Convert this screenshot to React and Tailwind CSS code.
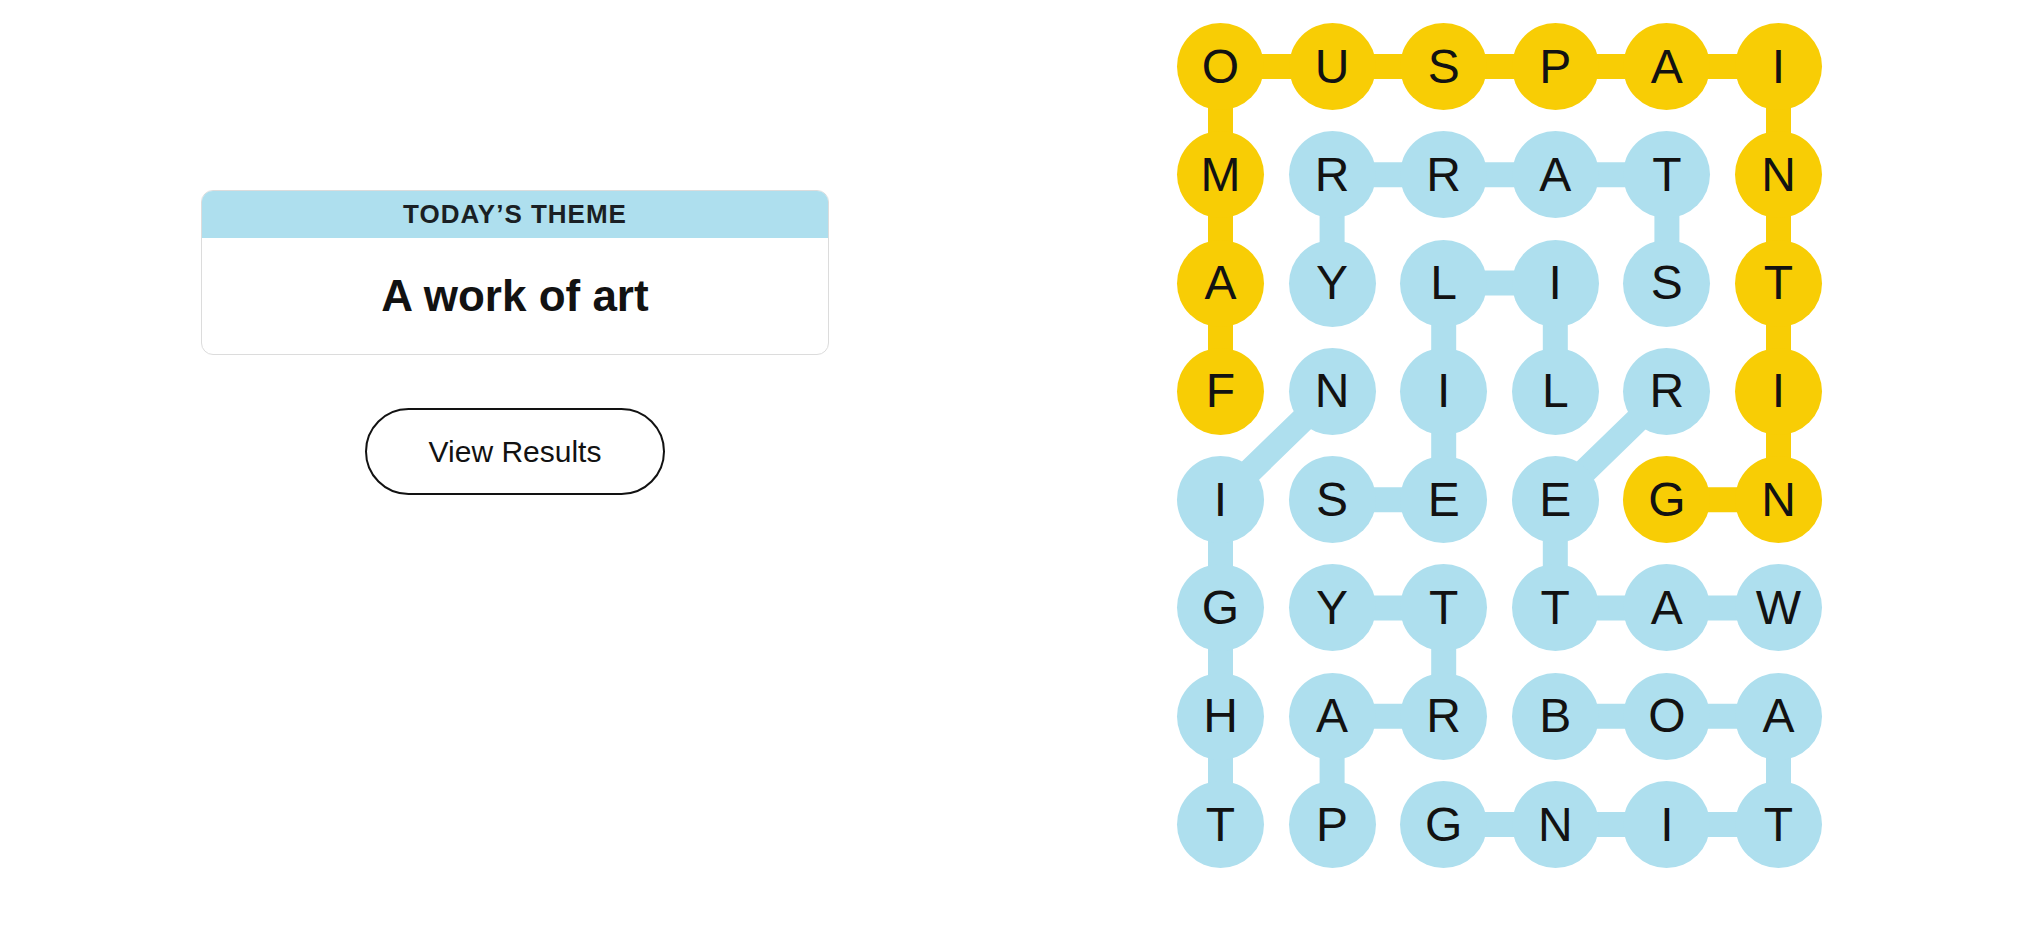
import React from "react";

const GRID = [
  "OUSPAI",
  "MRRATN",
  "AYLIST",
  "FNILRI",
  "ISEEGN",
  "GYTTAW",
  "HARBOA",
  "TPGNIT",
];

// spangram cells
const SPANGRAM = [
  [3, 0], [2, 0], [1, 0], [0, 0], [0, 1], [0, 2], [0, 3],
  [0, 4], [0, 5], [1, 5], [2, 5], [3, 5], [4, 5], [4, 4],
];

const WORDS = [
  [[2, 4], [1, 4], [1, 3], [1, 2], [1, 1], [2, 1]],
  [[3, 1], [4, 0], [5, 0], [6, 0], [7, 0]],
  [[5, 5], [5, 4], [5, 3], [4, 3], [3, 4]],
  [[3, 3], [2, 3], [2, 2], [3, 2], [4, 2], [4, 1]],
  [[6, 3], [6, 4], [6, 5], [7, 5], [7, 4], [7, 3], [7, 2]],
  [[7, 1], [6, 1], [6, 2], [5, 2], [5, 1]],
];

const D = 87;
const SX = 111.6;
const SY = 108.3;
const YELLOW = "#f8cd05";
const BLUE = "#aedfee";

const cx = (c) => D / 2 + c * SX;
const cy = (r) => D / 2 + r * SY;

const isSpangram = (r, c) => SPANGRAM.some(([a, b]) => a === r && b === c);

const Path = ({ cells, color }) => (
  <polyline
    points={cells.map(([r, c]) => `${cx(c)},${cy(r)}`).join(" ")}
    fill="none"
    stroke={color}
    strokeWidth="25"
    strokeLinejoin="round"
  />
);

const Board = () => (
  <div className="relative w-[645px] h-[845px]">
    <svg className="absolute inset-0" width="645" height="845">
      <Path cells={SPANGRAM} color={YELLOW} />
      {WORDS.map((w, i) => (
        <Path key={i} cells={w} color={BLUE} />
      ))}
    </svg>
    <div className="relative grid grid-cols-[repeat(6,87px)] gap-x-[24.6px] gap-y-[21.3px]">
      {GRID.map((row, r) =>
        row.split("").map((ch, c) => (
          <button
            key={`${r}-${c}`}
            className={
              "w-[87px] h-[87px] rounded-full flex items-center justify-center text-[48px] leading-none text-[#121212] font-['Liberation_Sans',Arial,sans-serif] " +
              (isSpangram(r, c) ? "bg-[#f8cd05]" : "bg-[#aedfee]")
            }
          >
            {ch}
          </button>
        ))
      )}
    </div>
  </div>
);

export default function App() {
  return (
    <div className="min-h-screen w-full bg-white flex justify-center items-start gap-[348px] pt-[23px] font-['Liberation_Sans',Arial,sans-serif] text-[#121212]">
      <div className="w-[628px] pt-[167px] flex flex-col items-center">
        <div className="w-full h-[165px] rounded-xl border-[1.5px] border-[#dcdcdc] overflow-hidden flex flex-col">
          <div className="h-[47px] bg-[#aedfee] flex items-center justify-center text-[26px] font-bold tracking-[1px] text-[#1a1f24]">
            TODAY’S THEME
          </div>
          <div className="flex-1 flex items-center justify-center text-[44px] font-bold">
            A work of art
          </div>
        </div>
        <button className="mt-[53px] w-[300px] h-[87px] rounded-full border-2 border-[#121212] bg-white text-[30px]">
          View Results
        </button>
      </div>
      <Board />
    </div>
  );
}
